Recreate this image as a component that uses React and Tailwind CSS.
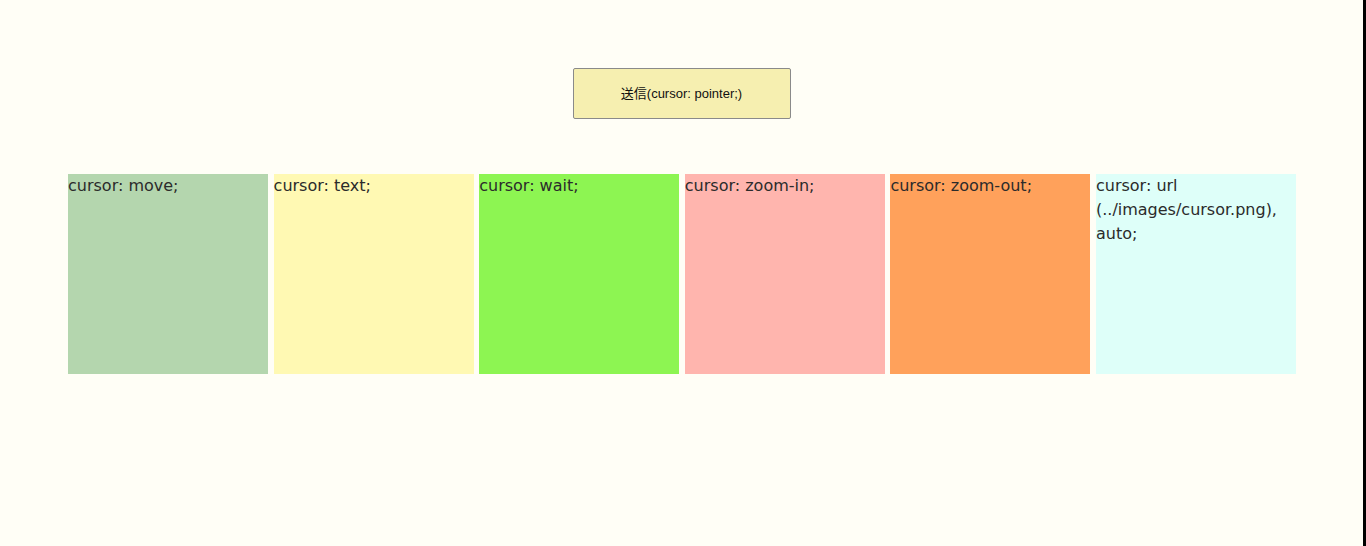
import React from "react";

const boxes = [
  { label: "cursor: move;", bg: "bg-[#b4d6ae]" },
  { label: "cursor: text;", bg: "bg-[#fff9b3]" },
  { label: "cursor: wait;", bg: "bg-[#8df552]" },
  { label: "cursor: zoom-in;", bg: "bg-[#ffb5ae]" },
  { label: "cursor: zoom-out;", bg: "bg-[#ffa15b]" },
  { label: "cursor: url (../images/cursor.png), auto;", bg: "bg-[#defff9]" },
];

export default function App() {
  return (
    <div className="flex h-[546px] w-full bg-[#fffef6]">
      <div className="flex-1 flex flex-col items-center">
        <button
          type="button"
          className="mt-[68px] w-[218px] h-[51px] bg-[#f6efb0] border border-[#8a8a8a] rounded-[2px] text-[13px] text-[#111] cursor-pointer font-['Liberation_Sans','Noto_Sans_CJK_JP',sans-serif]"
        >
          送信(cursor: pointer;)
        </button>
        <div className="mt-[55px] self-start ml-[68px] flex gap-[5.6px] font-['DejaVu_Sans',sans-serif] text-[16px] leading-[24px] text-[#2b2b2b]">
          {boxes.map((b) => (
            <div key={b.label} className={`w-[200px] h-[200px] ${b.bg}`}>
              {b.label}
            </div>
          ))}
        </div>
      </div>
      <div className="w-[3px] bg-black" />
    </div>
  );
}
